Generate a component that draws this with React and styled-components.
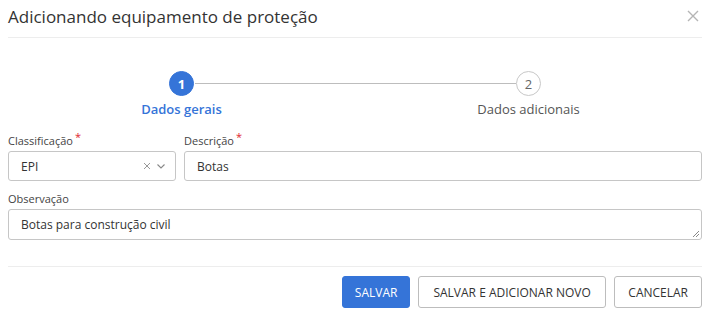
import React from "react";
import styled, { createGlobalStyle } from "styled-components";

const Global = createGlobalStyle`
  html, body { margin: 0; padding: 0; background: #fff; }
  body { font-family: "Open Sans", "Noto Sans", sans-serif; color: #333; }
  * { box-sizing: border-box; }
`;

const Dialog = styled.div`
  width: 710px;
  height: 312px;
  padding: 0 8px;
`;

const Header = styled.div`
  height: 38px;
  display: flex;
  align-items: center;
  justify-content: space-between;
  border-bottom: 1px solid #ededed;
  padding-bottom: 5px;
`;

const Title = styled.h1`
  margin: 0;
  font-size: 17px;
  font-weight: 400;
  color: #333;
`;

const Close = styled.button`
  border: 0;
  background: none;
  padding: 0;
  margin-right: 2px;
  width: 14px;
  height: 14px;
  display: flex;
  cursor: pointer;
`;

const Stepper = styled.div`
  display: flex;
  padding-top: 33px;
  height: 95px;
`;

const Step = styled.div`
  flex: 1;
  position: relative;
  display: flex;
  flex-direction: column;
  align-items: center;
`;

const Line = styled.div`
  position: absolute;
  top: 12px;
  left: calc(50% + 13px);
  width: calc(100% - 26px);
  height: 1px;
  background: #bdbdbd;
`;

const Circle = styled.div`
  width: 25px;
  height: 25px;
  border-radius: 50%;
  display: flex;
  align-items: center;
  justify-content: center;
  font-size: 13px;
  font-weight: ${(p) => (p.$active ? 700 : 400)};
  background: ${(p) => (p.$active ? "#3574d8" : "#fff")};
  color: ${(p) => (p.$active ? "#fff" : "#666")};
  border: 1px solid ${(p) => (p.$active ? "#3574d8" : "#c8c8c8")};
`;

const StepLabel = styled.div`
  margin-top: 4px;
  font-size: 13px;
  font-weight: ${(p) => (p.$active ? 600 : 400)};
  color: ${(p) => (p.$active ? "#3574d8" : "#555")};
`;

const Row = styled.div`
  display: flex;
  gap: 8px;
  margin-top: ${(p) => p.$mt || 0}px;
`;

const Field = styled.div`
  display: flex;
  flex-direction: column;
  width: ${(p) => (p.$w ? `${p.$w}px` : "auto")};
  flex: ${(p) => (p.$w ? "none" : 1)};
`;

const Label = styled.label`
  font-size: 11px;
  color: #444;
  height: 16px;
  line-height: 16px;
  margin-bottom: 2px;
`;

const Req = styled.sup`
  color: #e0262f;
  font-size: 11px;
  margin-left: 2px;
  line-height: 0;
  position: relative;
  top: 1px;
`;

const Box = styled.div`
  height: ${(p) => p.$h || 30}px;
  border: 1px solid #c6c6c6;
  border-radius: 3px;
  display: flex;
  align-items: center;
  padding: 0 12px;
  font-size: 12px;
  color: #333;
  background: #fff;
  position: relative;
`;

const SelectValue = styled.span`
  flex: 1;
`;

const SelectIcons = styled.span`
  display: flex;
  align-items: center;
  gap: 5px;
  margin-right: -3px;
`;

const Grip = styled.svg`
  position: absolute;
  right: 1px;
  bottom: 1px;
`;

const Footer = styled.div`
  margin-top: 26px;
  border-top: 1px solid #ededed;
  padding-top: 9px;
  display: flex;
  justify-content: flex-end;
  gap: 8px;
`;

const Button = styled.button`
  height: 32px;
  padding: 0 ${(p) => p.$px || 12}px;
  border-radius: 3px;
  font-family: inherit;
  font-size: 12px;
  text-transform: uppercase;
  cursor: pointer;
  border: 1px solid ${(p) => (p.$primary ? "#3574d8" : "#bdbdbd")};
  background: ${(p) => (p.$primary ? "#3574d8" : "#fff")};
  color: ${(p) => (p.$primary ? "#fff" : "#333")};
`;

export default function App() {
  return (
    <>
      <Global />
      <Dialog>
        <Header>
          <Title>Adicionando equipamento de proteção</Title>
          <Close aria-label="Fechar">
            <svg width="14" height="14" viewBox="0 0 14 14">
              <path d="M2 2L12 12M12 2L2 12" stroke="#b5b5b5" strokeWidth="1.4" />
            </svg>
          </Close>
        </Header>
        <Stepper>
          <Step>
            <Line />
            <Circle $active>1</Circle>
            <StepLabel $active>Dados gerais</StepLabel>
          </Step>
          <Step>
            <Circle>2</Circle>
            <StepLabel>Dados adicionais</StepLabel>
          </Step>
        </Stepper>
        <Row>
          <Field $w={168}>
            <Label>
              Classificação<Req>*</Req>
            </Label>
            <Box>
              <SelectValue>EPI</SelectValue>
              <SelectIcons>
                <svg width="8" height="8" viewBox="0 0 8 8">
                  <path d="M1 1L7 7M7 1L1 7" stroke="#999" strokeWidth="1" />
                </svg>
                <svg width="10" height="8" viewBox="0 0 10 8">
                  <path d="M1.5 2.5L5 6L8.5 2.5" stroke="#888" strokeWidth="1.1" fill="none" />
                </svg>
              </SelectIcons>
            </Box>
          </Field>
          <Field>
            <Label>
              Descrição<Req>*</Req>
            </Label>
            <Box>Botas</Box>
          </Field>
        </Row>
        <Row $mt={10}>
          <Field>
            <Label>Observação</Label>
            <Box $h={31}>
              Botas para construção civil
              <Grip width="8" height="8" viewBox="0 0 8 8">
                <path d="M7 1L1 7M7 4L4 7" stroke="#888" strokeWidth="1" />
              </Grip>
            </Box>
          </Field>
        </Row>
        <Footer>
          <Button $primary $px={11.5}>Salvar</Button>
          <Button $px={14.5}>Salvar e adicionar novo</Button>
          <Button $px={13}>Cancelar</Button>
        </Footer>
      </Dialog>
    </>
  );
}
